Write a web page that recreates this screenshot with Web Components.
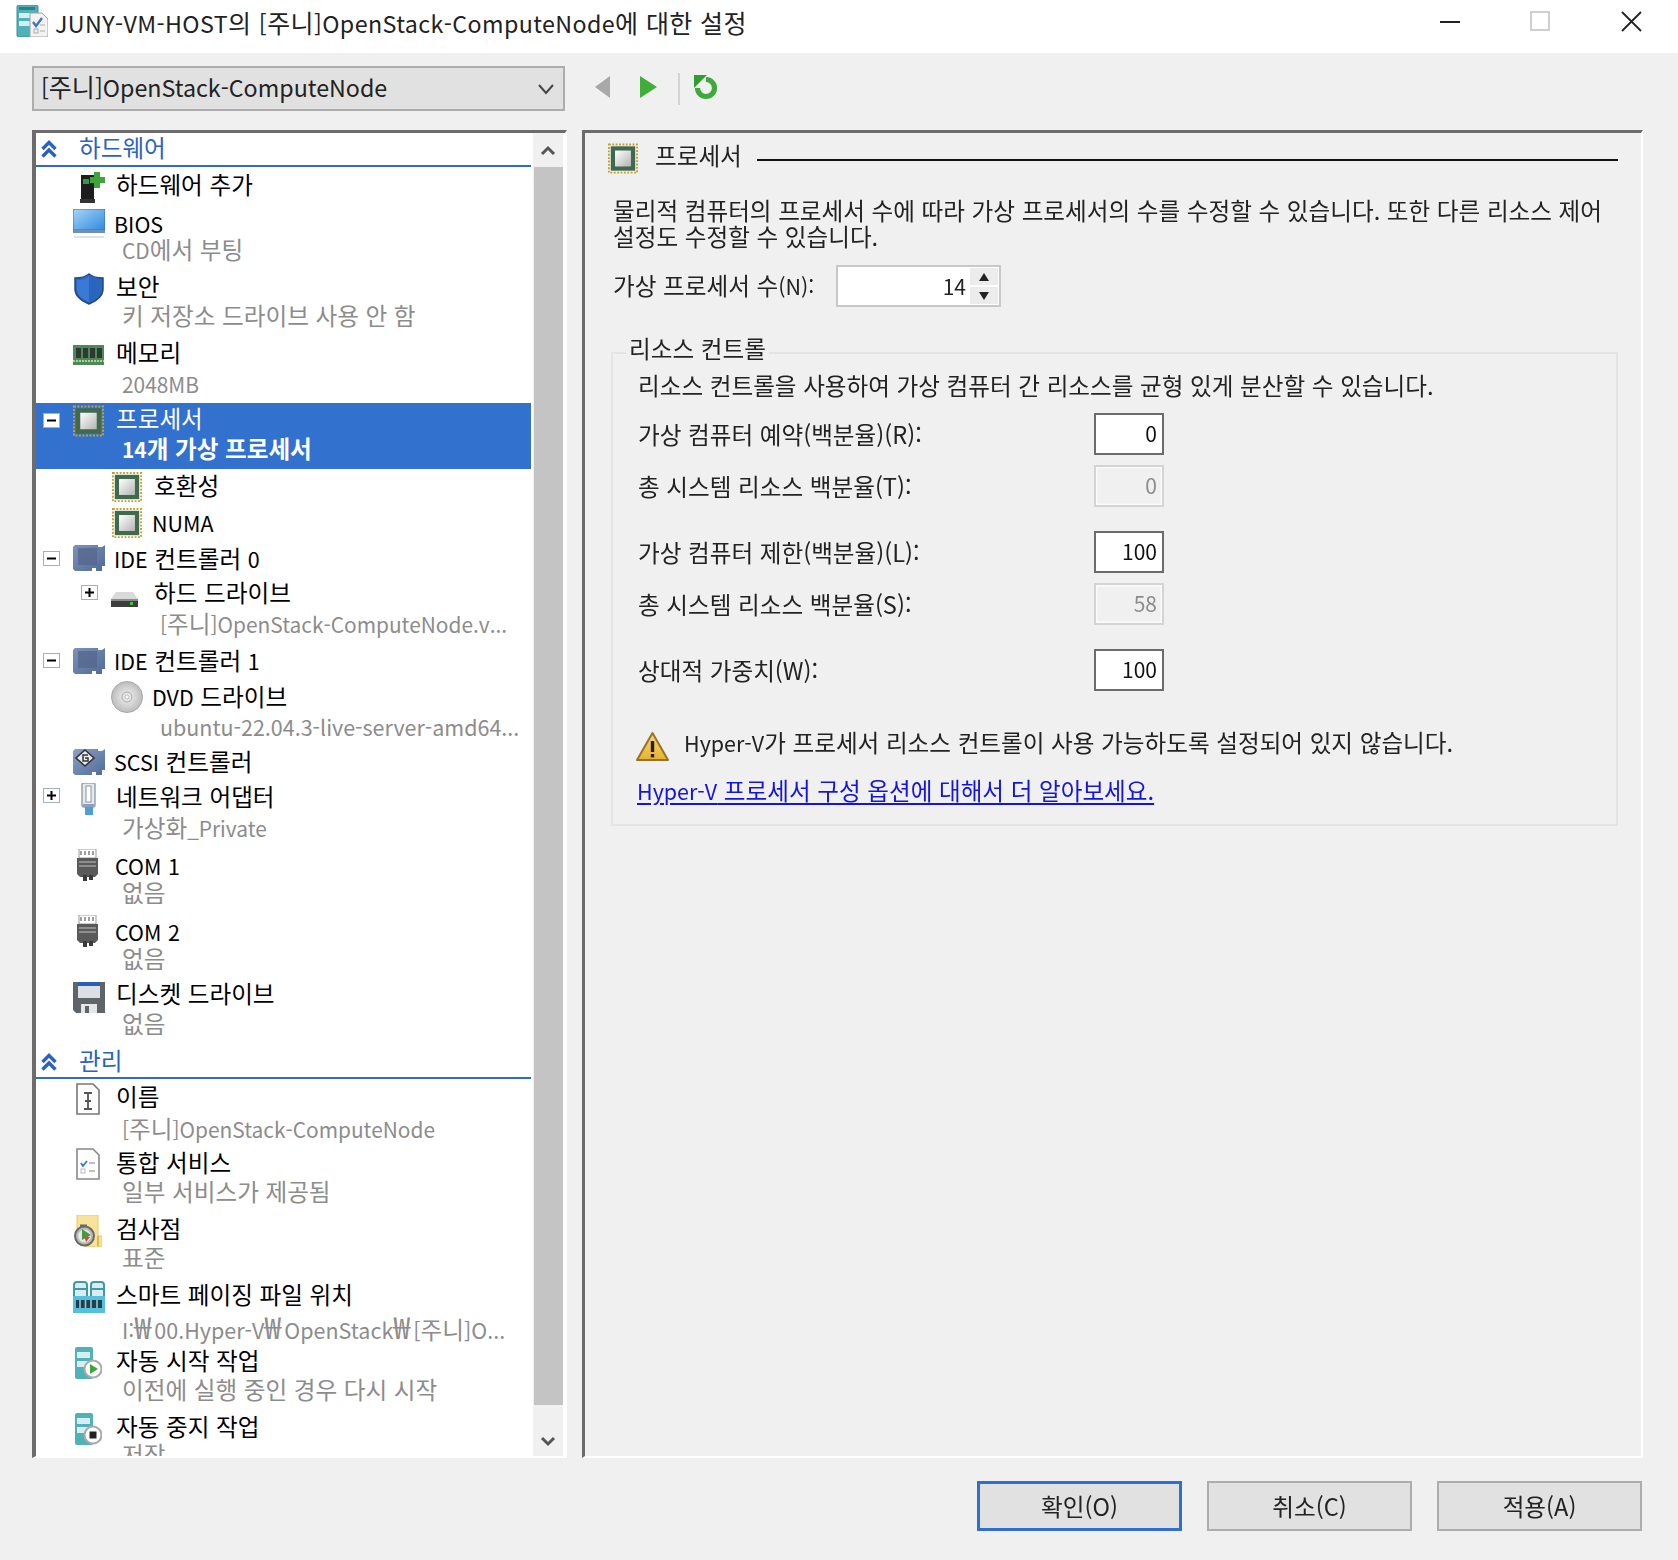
<!DOCTYPE html>
<html lang="ko"><head><meta charset="utf-8"><title>설정</title>
<style>
html,body{margin:0;padding:0;background:#f0f0f0}
body{font-family:"Noto Sans CJK KR","Noto Sans",sans-serif;font-size:23.6px;color:#111;width:1678px;height:1560px;overflow:hidden}
.en{font-size:.91em}
vm-titlebar .en,vm-toolbar .en{font-size:.93em}
vm-button .en,vm-field .en{font-size:1em}
[slot=sub] .en{font-size:.885em}
[slot=sub].wide .en{font-size:.91em}
.won{font-size:1.3em;letter-spacing:3px;line-height:1}
</style></head><body>
<vm-dialog>
  <vm-titlebar>JUNY-VM-HOST의 [주니]OpenStack-ComputeNode에 대한 설정</vm-titlebar>
  <vm-toolbar>[주니]OpenStack-ComputeNode</vm-toolbar>
  <vm-main>
    <vm-tree>
      <vm-section h="34">하드웨어</vm-section>
      <vm-item icon="add" h="36" tc="17" iy="5" ix="6" iw="26" ih="31">하드웨어 추가</vm-item>
      <vm-item icon="monitor" h="62" tc="20" sc="47" iy="6" iw="32" ih="30" tx="-2">BIOS<span slot="sub">CD에서 부팅</span></vm-item>
      <vm-item icon="shield" h="66" tc="21" sc="51" iy="8" ix="1" iw="30" ih="32">보안<span slot="sub">키 저장소 드라이브 사용 안 함</span></vm-item>
      <vm-item icon="memory" h="72" tc="21" sc="53" iy="14" iw="31" ih="20">메모리<span slot="sub">2048MB</span></vm-item>
      <vm-item icon="chip" h="66" tc="15" sc="45" iy="2" iw="31" ih="32" exp="minus" ey="10" selected>프로세서<span slot="sub">14개 가상 프로세서</span></vm-item>
      <vm-item level="1" icon="chip" h="36" tc="16" iy="3" ix="1" iw="30" ih="30">호환성</vm-item>
      <vm-item level="1" icon="chip" h="36" tc="17" iy="3" ix="1" iw="30" ih="30" tx="-2">NUMA</vm-item>
      <vm-item icon="ctrl" h="34" tc="17" iy="4" iw="32" ih="26" exp="minus" ey="10" tx="-2">IDE 컨트롤러 0</vm-item>
      <vm-item level="1" icon="hdd" h="68" tc="17" sc="49" iy="17" iw="27" ih="16" exp="plus" ey="10">하드 드라이브<span slot="sub">[주니]OpenStack-ComputeNode.v...</span></vm-item>
      <vm-item icon="ctrl" h="35" tc="17" iy="5" iw="32" ih="26" exp="minus" ey="10" tx="-2">IDE 컨트롤러 1</vm-item>
      <vm-item level="1" icon="dvd" h="67" tc="18" sc="49" iy="3" iw="32" ih="32" tx="-2">DVD 드라이브<span slot="sub" class="wide">ubuntu-22.04.3-live-server-amd64...</span></vm-item>
      <vm-item icon="scsi" h="34" tc="16" iy="4" iw="32" ih="26" tx="-2">SCSI 컨트롤러</vm-item>
      <vm-item icon="net" h="68" tc="17" sc="49" iy="4" ix="7" iw="17" ih="32" exp="plus" ey="9">네트워크 어댑터<span slot="sub">가상화_Private</span></vm-item>
      <vm-item icon="com" h="66" tc="18" sc="46" iy="2" ix="3" iw="23" ih="32" tx="-1">COM 1<span slot="sub">없음</span></vm-item>
      <vm-item icon="com" h="62" tc="18" sc="46" iy="2" ix="3" iw="23" ih="32" tx="-1">COM 2<span slot="sub">없음</span></vm-item>
      <vm-item icon="floppy" h="68" tc="18" sc="49" iy="6" iw="32" ih="32">디스켓 드라이브<span slot="sub">없음</span></vm-item>
      <vm-section h="36" pt="4">관리</vm-section>
      <vm-item icon="docname" h="66" tc="17" sc="50" iy="4" ix="3" iw="24" ih="32">이름<span slot="sub">[주니]OpenStack-ComputeNode</span></vm-item>
      <vm-item icon="doccheck" h="66" tc="17" sc="47" iy="3" ix="3" iw="24" ih="32">통합 서비스<span slot="sub">일부 서비스가 제공됨</span></vm-item>
      <vm-item icon="checkpoint" h="66" tc="17" sc="47" iy="4" ix="1" iw="28" ih="32">검사점<span slot="sub">표준</span></vm-item>
      <vm-item icon="paging" h="66" tc="17" sc="50" iy="4" iw="32" ih="32">스마트 페이징 파일 위치<span slot="sub" class="wide">I:<span class="won">₩</span>00.Hyper-V<span class="won">₩</span>OpenStack<span class="won">₩</span>[주니]O...</span></vm-item>
      <vm-item icon="autostart" h="66" tc="17" sc="47" iy="4" ix="1" iw="28" ih="32">자동 시작 작업<span slot="sub">이전에 실행 중인 경우 다시 시작</span></vm-item>
      <vm-item icon="autostop" h="66" tc="17" sc="46" iy="4" ix="1" iw="28" ih="32">자동 중지 작업<span slot="sub">저장</span></vm-item>
    </vm-tree>
    <vm-panel>
      <span slot="title">프로세서</span>
      <div class="p">물리적 컴퓨터의 프로세서 수에 따라 가상 프로세서의 수를 수정할 수 있습니다. 또한 다른 리소스 제어<br>설정도 수정할 수 있습니다.</div>
      <vm-spin value="14">가상 프로세서 수(N):</vm-spin>
      <vm-group>
        <span slot="legend">리소스 컨트롤</span>
        <span slot="desc">리소스 컨트롤을 사용하여 가상 컴퓨터 간 리소스를 균형 있게 분산할 수 있습니다.</span>
        <vm-field value="0">가상 컴퓨터 예약(백분율)(R):</vm-field>
        <vm-field value="0" disabled mt="10">총 시스템 리소스 백분율(T):</vm-field>
        <vm-field value="100" mt="24">가상 컴퓨터 제한(백분율)(L):</vm-field>
        <vm-field value="58" disabled mt="10">총 시스템 리소스 백분율(S):</vm-field>
        <vm-field value="100" mt="24">상대적 가중치(W):</vm-field>
        <vm-warning>Hyper-V가 프로세서 리소스 컨트롤이 사용 가능하도록 설정되어 있지 않습니다.</vm-warning>
        <vm-link>Hyper-V 프로세서 구성 옵션에 대해서 더 알아보세요.</vm-link>
      </vm-group>
    </vm-panel>
  </vm-main>
  <vm-footer>
    <vm-button default>확인(O)</vm-button>
    <vm-button>취소(C)</vm-button>
    <vm-button>적용(A)</vm-button>
  </vm-footer>
</vm-dialog>
<script>
(function wrapLatin(){
  const root=document.querySelector('vm-dialog');
  const tw=document.createTreeWalker(root,NodeFilter.SHOW_TEXT);
  const nodes=[];while(tw.nextNode()){if(tw.currentNode.nodeValue.trim())nodes.push(tw.currentNode);}
  const re=/[A-Za-z0-9_\[\]()\-:.]*[A-Za-z0-9\[\]()][A-Za-z0-9_\[\]()\-:.]*/g;
  for(const n of nodes){
    const v=n.nodeValue;if(!re.test(v))continue;re.lastIndex=0;
    const f=document.createDocumentFragment();let i=0,m;
    while((m=re.exec(v))){if(m.index>i)f.append(v.slice(i,m.index));const s=document.createElement('span');s.className='en';s.textContent=m[0];f.append(s);i=m.index+m[0].length;}
    if(i<v.length)f.append(v.slice(i));
    n.parentNode.replaceChild(f,n);
  }
})();
const G=(id,a,b,v)=>`<linearGradient id="${id}" x1="0" y1="0" x2="${v?0:1}" y2="${v?1:1}"><stop offset="0" stop-color="${a}"/><stop offset="1" stop-color="${b}"/></linearGradient>`;
const ICONS={
 chip:[32,32,`<defs>${G('g','#fff','#b4b4b4')}</defs><rect x="1" y="1" width="30" height="30" fill="none" stroke="#c9a02e" stroke-width="2" stroke-dasharray="2 1.6"/><rect x="3" y="3" width="26" height="26" fill="#3f6a4e"/><rect x="7.500" y="7.500" width="17" height="17" fill="url(#g)"/>`],
 add:[26,31,`<rect x="2" y="3" width="13" height="24" fill="#1d1d1d"/><rect x="4" y="7" width="6" height="5" fill="#2f9a4a"/><rect x="1" y="27" width="15" height="4" fill="#333"/><path d="M15 0h6v5h5v6h-5v5h-6v-5h-4V5h4z" fill="#3fa43a"/>`],
 monitor:[32,30,`<defs>${G('g','#a8d4f8','#2f8ae0')}</defs><rect x="0" y="0" width="32" height="21" fill="url(#g)" stroke="#3a6fb0" stroke-width="1"/><rect x="0" y="21" width="32" height="3" fill="#6f8fb5"/><rect x="1" y="27" width="30" height="2" fill="#dfe4ea"/>`],
 shield:[30,32,`<path d="M15 1c4 3 8 4 14 4v11c0 8-7 12-14 15C8 28 1 24 1 16V5c6 0 10-1 14-4z" fill="#2a66c0" stroke="#234a80" stroke-width="1.5"/><path d="M15 3v26C9 26 3 23 3 16V7c5 0 9-1 12-4z" fill="#3b7ad4"/>`],
 memory:[31,20,`<rect x="0" y="0" width="31" height="20" fill="#4d8a58"/><rect x="3" y="3" width="5" height="10" fill="#2d3a32"/><rect x="10" y="3" width="5" height="10" fill="#2d3a32"/><rect x="17" y="3" width="5" height="10" fill="#2d3a32"/><rect x="24" y="3" width="5" height="10" fill="#2d3a32"/><path d="M0 16h31" stroke="#b9c9a0" stroke-width="2" stroke-dasharray="2 1"/>`],
 ctrl:[32,26,`<defs>${G('g','#7d93b8','#4f6b98')}</defs><path d="M2 0h23v2h4l3-2v21l-3 0v5h-6v-3h-4v3H2l-2-2V2z" fill="url(#g)"/><rect x="5" y="3" width="19" height="17" fill="#55668a" opacity=".75"/>`],
 scsi:[32,26,`<defs>${G('g','#8ba2c4','#4f6b98')}</defs><path d="M2 0h23v2h4l3-2v21l-3 0v5h-6v-3h-4v3H2l-2-2V2z" fill="url(#g)"/><path d="M12 1l9 8-9 8-9-8z" fill="#e9edf3" stroke="#333" stroke-width="1.6"/><path d="M15 6h-5v6h5V9h-3" fill="none" stroke="#333" stroke-width="1.5"/>`],
 hdd:[27,16,`<path d="M5 0h17l5 7H0z" fill="#d9d9d9"/><rect x="0" y="7" width="27" height="8" fill="#3d3d3d"/><rect x="0" y="7" width="27" height="2" fill="#8a8a8a"/><rect x="19" y="10" width="3" height="3" fill="#3fc04a"/>`],
 dvd:[32,32,`<defs><radialGradient id="g"><stop offset="0" stop-color="#f6f6f6"/><stop offset=".6" stop-color="#d2d2d2"/><stop offset="1" stop-color="#bcbcbc"/></radialGradient></defs><circle cx="16" cy="16" r="15.5" fill="url(#g)" stroke="#a8a8a8"/><circle cx="16" cy="16" r="5" fill="#e6e6e6" stroke="#aaa"/><circle cx="16" cy="16" r="2" fill="#fff" stroke="#aaa" stroke-width=".7"/>`],
 net:[17,32,`<rect x="2" y="0" width="13" height="24" rx="2" fill="#e5e8ee" stroke="#98a2b2" stroke-width="1.5"/><rect x="6" y="3" width="5" height="16" fill="#fff" stroke="#8a94a6"/><rect x="3" y="21" width="11" height="3" fill="#8ea0ba"/><rect x="5" y="24" width="8" height="8" fill="#4d9edc"/>`],
 com:[23,32,`<path d="M3 0h17v9H3z" fill="#fff" stroke="#9a9a9a"/><path d="M5 2v4M9 2v4M13 2v4M17 2v4" stroke="#777" stroke-width="1.4"/><path d="M1 9h21v16l-3 3H4l-3-3z" fill="#5a5a5a"/><path d="M3 13h17M3 17h17" stroke="#a0a0a0" stroke-width="1.6"/><rect x="7" y="26" width="4" height="6" fill="#3b3b3b"/><rect x="13" y="26" width="4" height="5" fill="#3b3b3b"/>`],
 floppy:[32,32,`<path d="M0 1h32v31H3l-3-3z" fill="#5f6468"/><rect x="5" y="1" width="22" height="16" fill="#dcdfe3"/><rect x="5" y="1" width="22" height="4" fill="#2a5fb5"/><rect x="8" y="23" width="16" height="9" fill="#e5e5e5"/><rect x="12" y="25" width="4" height="7" fill="#5f6468"/>`],
 docname:[24,32,`<path d="M1 1h16l6 6v24H1z" fill="#fdfdfd" stroke="#777" stroke-width="1.6"/><path d="M8 10h8M8 26h8M12 10v16M9 18h6" stroke="#555" stroke-width="1.8" fill="none"/>`],
 doccheck:[24,32,`<path d="M1 1h16l6 6v24H1z" fill="#fdfdfd" stroke="#888" stroke-width="1.6"/><path d="M5 15l2 3 4-5" stroke="#3578d0" stroke-width="1.8" fill="none"/><path d="M13 15h6M13 23h6" stroke="#aaa" stroke-width="1.6"/><rect x="5" y="21" width="4" height="4" fill="none" stroke="#bbb"/>`],
 checkpoint:[28,32,`<path d="M3 0h21v21h4v10a1 1 0 0 1-1 1H11V26H3z" fill="#f9e29a" stroke="#e9c765"/><path d="M24 21v10" stroke="#e3b64a" stroke-width="2"/><rect x="6" y="9.500" width="7" height="2.500" fill="#6a6a6a"/><circle cx="10.500" cy="21" r="9.500" fill="#b8b8b8" stroke="#6a6a6a" stroke-width="2"/><circle cx="10.500" cy="21" r="6.500" fill="#e8e8e8"/><path d="M8 14l9 6-9 5z" fill="#38a33d"/><path d="M10 21l6 1-4 5z" fill="#d84a3a"/>`],
 paging:[32,32,`<rect x="1" y="1" width="13" height="17" rx="3" fill="#d8edf0" stroke="#3f9aa6" stroke-width="2"/><rect x="18" y="1" width="13" height="17" rx="3" fill="#d8edf0" stroke="#3f9aa6" stroke-width="2"/><path d="M1 8h13M18 8h13" stroke="#3f9aa6" stroke-width="2"/><rect x="0" y="15" width="32" height="17" fill="#55c0dc"/><rect x="3" y="19" width="26" height="8" fill="#1c4252"/><path d="M7 19v8M12.500 19v8M18 19v8M24 19v8" stroke="#9cc4d0" stroke-width="1.600"/>`],
 autostart:[28,32,`<rect x="1" y="0" width="18" height="32" rx="2" fill="#4fb2b8"/><rect x="3" y="5" width="13" height="6" fill="#d6eef0"/><rect x="3" y="14" width="13" height="6" fill="#d6eef0"/><circle cx="19" cy="22" r="8.5" fill="#fff" stroke="#aaa" stroke-width="2"/><path d="M16 17l8 5-8 5z" fill="#3aa63c"/>`],
 autostop:[28,32,`<rect x="1" y="0" width="18" height="32" rx="2" fill="#4fb2b8"/><rect x="3" y="5" width="13" height="6" fill="#d6eef0"/><rect x="3" y="14" width="13" height="6" fill="#d6eef0"/><circle cx="19" cy="22" r="8.5" fill="#fff" stroke="#aaa" stroke-width="2"/><rect x="15.5" y="18.5" width="7" height="7" fill="#222"/>`],
 app:[32,32,`<rect x="1" y="0" width="21" height="32" rx="1.500" fill="#4fb2b8" stroke="#3b8f96"/><rect x="3" y="2" width="16" height="3" fill="#2f7f86"/><rect x="3" y="8" width="16" height="5" fill="#d6eef0"/><rect x="3" y="16" width="16" height="5" fill="#d6eef0"/><path d="M14 8h12l6 6v18H14z" fill="#f3f3f3" stroke="#a0a0a0"/><path d="M17 17l3 4 6-8" fill="none" stroke="#3a78c8" stroke-width="2.400"/><rect x="18" y="24" width="4" height="4" fill="none" stroke="#aaa"/><path d="M24 26h5M24 20h5" stroke="#aaa"/>`],
 warn:[33,29,`<defs>${G('g','#f9d878','#e8b030',1)}</defs><path d="M16.5 1L32 28H1z" fill="url(#g)" stroke="#94742a" stroke-width="2" stroke-linejoin="round"/><rect x="14.8" y="9" width="3.4" height="11" fill="#222"/><rect x="14.8" y="22" width="3.4" height="3.4" fill="#222"/>`],
 back:[15,22,`<path d="M15 0v22L0 11z" fill="#a8a8a8"/>`],
 fwd:[17,22,`<path d="M0 0v22l17-11z" fill="#3fae3a"/>`],
 refresh:[26,26,`<path d="M13 5.500a8.500 8.500 0 1 1-8.500 8.500" fill="none" stroke="#3cab3c" stroke-width="5.200"/><path d="M1 1h13L1 14z" fill="#2f9f31"/>`],
 chev:[16,18,`<path d="M1.5 9L8 2.5 14.500 9M1.500 16.500L8 10l6.500 6.500" fill="none" stroke="#2a62c4" stroke-width="3.400"/>`]
};
const def=(n,css,html)=>customElements.define(n,class extends HTMLElement{
  connectedCallback(){ if(this.shadowRoot) return; const s=this.attachShadow({mode:'open'});
    s.innerHTML=`<style>${css}</style>`+(typeof html==='function'?html(this):html);}
});
const ic=(name,w,h)=>`<vm-icon name="${name}"${w?` w="${w}" h="${h}"`:''}></vm-icon>`;
customElements.define('vm-icon',class extends HTMLElement{
  connectedCallback(){ if(this.shadowRoot) return; const s=this.attachShadow({mode:'open'}); const [vw,vh,body]=ICONS[this.getAttribute('name')];
    const w=this.getAttribute('w')||vw,h=this.getAttribute('h')||vh;
    s.innerHTML=`<style>:host{display:block;flex:none;width:${w}px;height:${h}px}svg{display:block}</style><svg width="${w}" height="${h}" viewBox="0 0 ${vw} ${vh}">${body}</svg>`;}
});
def('vm-dialog',`:host{display:flex;flex-direction:column;width:1678px;height:1560px;filter:blur(.55px)}`,`<slot></slot>`);
def('vm-titlebar',`:host{display:flex;align-items:center;height:53px;background:#fff;padding:0 36px 0 16px;box-sizing:border-box}
 .t{flex:1;margin-left:7px;white-space:nowrap;font-size:25px;letter-spacing:.4px;margin-top:-10px;color:#222}
 .i{margin-top:-11px}
 svg{display:block;margin-top:-11px;flex:none}`,
 `<div class="i">${ic('app')}</div><div class="t"><slot></slot></div>
 <svg width="20" height="2" style="margin-top:-9px"><rect width="20" height="2" fill="#222"/></svg>
 <svg width="20" height="20" style="margin-left:70px"><rect x="1" y="1" width="18" height="18" fill="none" stroke="#cfcfcf" stroke-width="2"/></svg>
 <svg width="21" height="21" style="margin-left:71px"><path d="M1 1l19 19M20 1L1 20" stroke="#222" stroke-width="1.800"/></svg>`);
def('vm-toolbar',`:host{display:flex;align-items:flex-start;height:77px;box-sizing:border-box;padding:13px 0 0 32px}
 .c{width:533px;height:45px;box-sizing:border-box;background:#e1e1e1;border:2px solid #adadad;display:flex;align-items:center;padding-left:7px;white-space:nowrap;font-size:25px;color:#222}
 .c span{flex:1;margin-top:-5px}.c svg{margin-right:8px}
 .n{display:flex;align-items:flex-start;margin:10px 0 0 30px}
 .s{width:2px;height:32px;background:#d4d4d4;margin:-3px 0 0 21px}`,
 `<div class="c"><span><slot></slot></span><svg width="18" height="12"><path d="M2 2l7 8 7-8" fill="none" stroke="#444" stroke-width="2"/></svg></div>
 <div class="n">${ic('back')}<div style="width:30px"></div>${ic('fwd')}<div class="s"></div><div style="width:13px"></div><div style="margin-top:-2px">${ic('refresh')}</div></div>`);
def('vm-main',`:host{display:flex;gap:15px;height:1328px;padding-left:32px}`,`<slot></slot>`);
def('vm-tree',`:host{display:flex;flex:none;width:535px;height:1328px;box-sizing:border-box;border-top:3px solid #6c6c6c;border-left:4px solid #6c6c6c;border-right:2px solid #fff;border-bottom:2px solid #fff;background:#fff;overflow:hidden}
 .l{width:495px;flex:none;height:100%;overflow:hidden}
 .b{margin-left:2px;width:30px;flex:none;background:#f0f0f0;display:flex;flex-direction:column;align-items:center;height:100%}
 .u{height:34px;flex:none;display:flex;align-items:center;justify-content:center}
 .th{width:29px;height:1238px;background:#c4c4c4;flex:none}
 .d{flex:1;display:flex;align-items:flex-end;justify-content:center;padding-bottom:9px}`,
 `<div class="l"><slot></slot></div><div class="b"><div class="u"><svg width="16" height="11"><path d="M2 9l6-6 6 6" fill="none" stroke="#555" stroke-width="3"/></svg></div><div class="th"></div><div class="d"><svg width="16" height="11"><path d="M2 2l6 6 6-6" fill="none" stroke="#555" stroke-width="3"/></svg></div></div>`);
def('vm-section',`:host{display:flex;align-items:center;box-sizing:border-box;border-bottom:2px solid #2f6bc8;color:#2a62c4;padding-left:5px;white-space:nowrap}
 .x{margin-left:22px;margin-top:-5px}`,
 t=>`<style>:host{height:${t.getAttribute('h')}px;padding-top:${+t.getAttribute('pt')||0}px}</style>${ic('chev')}<div class="x"><slot></slot></div>`);
def('vm-item',`:host{display:block;white-space:nowrap;color:#000}
 :host([selected]){background:#3272ce;color:#fff}
 .r{display:grid;height:100%;align-items:start}
 .e{width:17px;height:15px;box-sizing:border-box;border:1.500px solid #9fb0c8;background:#fff;display:flex;align-items:center;justify-content:center}
 .e svg{display:block}
 .t{line-height:30px;height:30px}
 .s{line-height:30px;height:30px;color:#8c8c8c;margin-left:6px}
 :host([selected]) .s{color:#fff;font-weight:700}`,
 t=>{const a=n=>t.getAttribute(n);const lvl=+(a('level')||0),h=+a('h'),tc=+a('tc'),sc=+(a('sc')||0);
  const ex=lvl?45:7,icx=lvl?75:37,tw=43;
  const e=a('exp');
  const pm=e==='plus'?'<path d="M2 6.500h9M6.500 2v9"':'<path d="M2 6.500h9"';
  return `<style>:host{height:${h}px}</style><div class="r" style="grid-template-columns:${icx}px ${tw}px 1fr">
  <div style="padding:${+a('ey')||0}px 0 0 ${ex}px">${e?`<div class="e"><svg width="13" height="13">${pm} stroke="#000" stroke-width="2"/></svg></div>`:''}</div>
  <div style="padding:${+a('iy')}px 0 0 ${+a('ix')||0}px">${ic(a('icon'),a('iw'),a('ih'))}</div>
  <div style="padding-top:${tc-15.5}px"><div class="t" style="margin-left:${+a('tx')||0}px"><slot></slot></div>${sc?`<div class="s" style="margin-top:${sc-tc-30.5}px"><slot name="sub"></slot></div>`:''}</div></div>`;});
def('vm-panel',`:host{display:block;flex:none;width:1061px;height:1328px;box-sizing:border-box;border-top:3px solid #6c6c6c;border-left:3px solid #6c6c6c;border-right:2px solid #fff;border-bottom:2px solid #fff;padding:10px 0 0 26px;color:#222}
 .h{display:flex;height:31px;margin:0 0 23px -3px}
 .ti{margin:-3px 0 0 17px;line-height:30px;white-space:nowrap}
 .li{flex:none;width:861px;height:2px;background:#111;margin:16px 0 0 15px}
 ::slotted(.p){padding-left:2px;line-height:26px;white-space:nowrap}`,
 `<div class="h">${ic('chip',30,31)}<div class="ti"><slot name="title"></slot></div><div class="li"></div></div><slot></slot>`);
def('vm-spin',`:host{display:flex;align-items:center;height:42px;margin:16px 0 45px 2px;white-space:nowrap}
 .l{width:223px;margin-top:-2px}
 .b{width:165px;height:42px;box-sizing:border-box;border:2px solid #c8c8c8;background:#fff;display:flex;align-items:center;justify-content:flex-end;font-size:21px}
 .v{margin-right:4px}
 .s{width:28px;height:36px;margin-right:1px;display:flex;flex-direction:column;gap:2px}
 .s div{flex:1;background:#ececec;display:flex;align-items:center;justify-content:center}`,
 t=>`<div class="l"><slot></slot></div><div class="b"><div class="v">${t.getAttribute('value')}</div><div class="s"><div><svg width="10" height="8"><path d="M5 0l5 8H0z" fill="#222"/></svg></div><div><svg width="10" height="8"><path d="M5 8l5-8H0z" fill="#222"/></svg></div></div></div>`);
def('vm-group',`:host{display:block;position:relative;width:1007px;box-sizing:border-box;border:2px solid #e4e4e4;padding:16px 0 16px 25px;white-space:nowrap}
 .lg{position:absolute;left:13px;top:-21px;background:#f0f0f0;padding:0 3px;line-height:30px}
 .d{line-height:30px;margin-bottom:13px}`,
 `<div class="lg"><slot name="legend"></slot></div><div class="d"><slot name="desc"></slot></div><slot></slot>`);
def('vm-field',`:host{display:flex;align-items:center;height:42px}
 .l{width:456px;margin-top:-1px}
 .b{width:70px;height:42px;box-sizing:border-box;border:2px solid #6c6c6c;background:#fff;text-align:right;line-height:36px;padding-right:5px;color:#111;font-size:21px}
 :host([disabled]) .b{border-color:#d4d4d4;background:#f0f0f0;color:#8c8c8c;box-shadow:inset 0 0 0 1.500px #fafafa}`,
 t=>`<style>:host{margin-top:${+t.getAttribute('mt')||0}px}</style><div class="l"><slot></slot></div><div class="b">${t.getAttribute('value')}</div>`);
def('vm-warning',`:host{display:flex;align-items:flex-start;margin:41px 0 0 -2px;height:29px}
 .x{margin:-5px 0 0 15px;line-height:30px}`,`${ic('warn')}<div class="x"><slot></slot></div>`);
def('vm-link',`:host{display:block;margin:14px 0 0 -1px;line-height:30px;padding-bottom:2px;color:#1414e0;text-decoration:underline;text-underline-offset:3px;text-decoration-thickness:2px}`,`<slot></slot>`);
def('vm-footer',`:host{display:flex;justify-content:flex-end;gap:25px;padding:23px 36px 0 0}`,`<slot></slot>`);
def('vm-button',`:host{display:flex;align-items:center;justify-content:center;width:205px;height:50px;box-sizing:border-box;border:2.500px solid #adadad;background:#e1e1e1;color:#222}
 :host([default]){border:3px solid #2f6fd0}
 div{margin-top:-1px}`,`<div><slot></slot></div>`);
</script>
</body></html>
